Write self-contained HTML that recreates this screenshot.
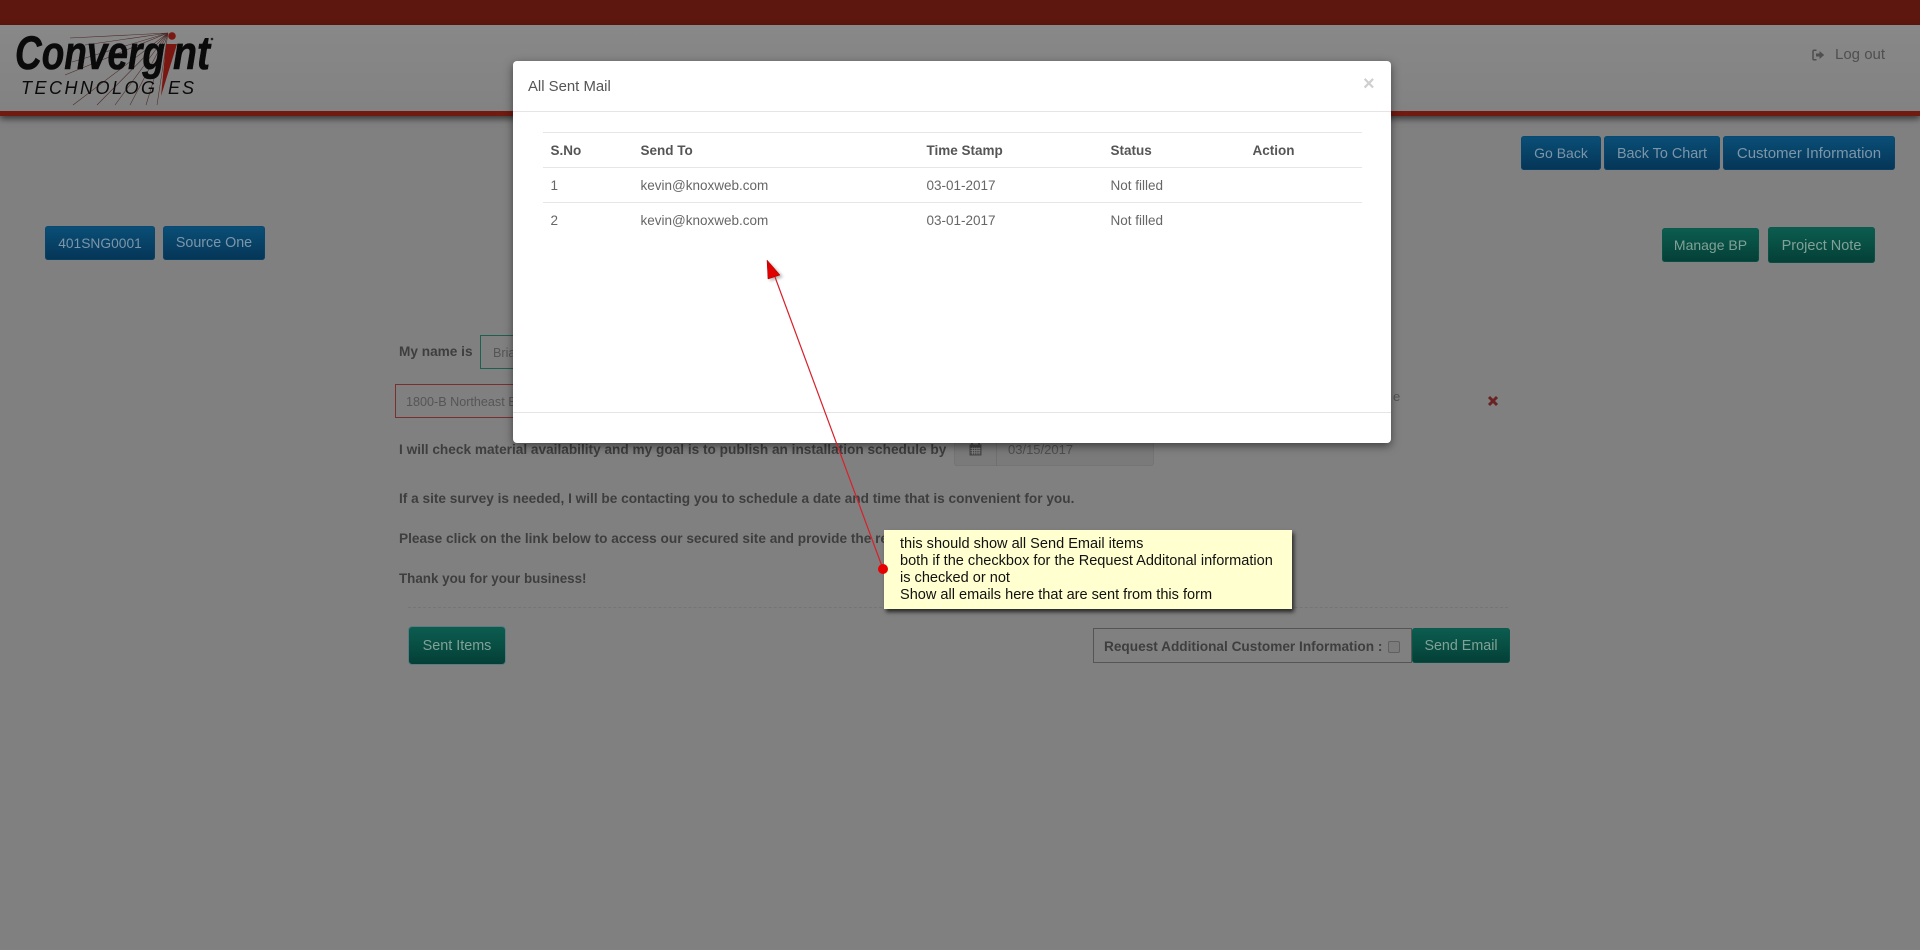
<!DOCTYPE html>
<html lang="en">
<head>
<meta charset="utf-8">
<title>All Sent Mail</title>
<style>
html,body{margin:0;padding:0;width:1920px;height:950px;overflow:hidden;background:#808080;font-family:"Liberation Sans",Arial,sans-serif}
.a{position:absolute;white-space:nowrap}
#top{left:0;top:0;width:1920px;height:25px;background:#5e170e}
#hdr{left:0;top:25px;width:1920px;height:86px;background:linear-gradient(#888888,#828282);border-bottom:5px solid #701a10;box-shadow:0 3px 6px rgba(0,0,0,.55)}
.btn{position:absolute;box-sizing:border-box;border-radius:3px;text-align:center;font-size:14.4px;white-space:nowrap;display:flex;align-items:center;justify-content:center}
.b{background:linear-gradient(#0a4f77,#053557);color:#7c95a8;box-shadow:inset 0 0 0 1px rgba(10,70,110,.6)}
.g{background:linear-gradient(#0c5d50,#043f36);color:#80a197;box-shadow:inset 0 0 0 1px rgba(10,90,75,.6)}
.t{color:#3e3e3e;font-weight:bold;font-size:13.65px;line-height:18px}
.in{position:absolute;box-sizing:border-box;font-size:12.6px;color:#555;display:flex;align-items:center;padding-top:1px}
#modal{left:513px;top:61px;width:878px;height:382px;background:#fff;border-radius:4px;box-shadow:0 3px 9px rgba(0,0,0,.5);color:#666}
#modal table{position:absolute;left:30px;top:71px;width:819px;border-collapse:collapse;table-layout:fixed;font-size:13.5px;border-top:1px solid #e6e6e6}
#modal th,#modal td{height:34px;padding:0 0 0 7.5px;text-align:left;border-bottom:1px solid #e6e6e6;box-sizing:border-box}
#modal tr{height:35px}
#modal tbody tr:last-child td{border-bottom:none}
#modal th{color:#555;font-weight:bold}
#note{left:884px;top:530px;width:408px;height:79px;background:#ffffcf;box-shadow:2px 3px 4px rgba(0,0,0,.7);font-size:14.55px;line-height:17px;color:#111;box-sizing:border-box;padding:6px 0 0 16px}
</style>
</head>
<body>
<div class="a" id="top"></div>
<div class="a" id="hdr"></div>

<svg class="a" style="left:0;top:25px" width="230" height="90" viewBox="0 25 230 90">
  <g stroke="#4a2a26" stroke-width=".55" fill="none">
    <path d="M168 33L70 38M168 33L85 45M168 33L72 62M168 33L65 75M168 33L73 105M168 33L97 105M168 33L115 105M168 33L130 105M168 33L146 105M168 33L157 105"/>
  </g>
  <g font-family="'Liberation Sans',Arial,sans-serif" font-style="italic" fill="#0a0a0a">
    <text x="15" y="69" font-size="47" font-weight="bold" textLength="150" lengthAdjust="spacingAndGlyphs" stroke="#0a0a0a" stroke-width=".6">Converg</text>
    <text x="173" y="69" font-size="47" font-weight="bold" textLength="37" lengthAdjust="spacingAndGlyphs" stroke="#0a0a0a" stroke-width=".6">nt</text>
    <text x="21" y="94" font-size="18" textLength="134" lengthAdjust="spacing">TECHNOLOG</text>
    <text x="168" y="94" font-size="18" textLength="26" lengthAdjust="spacing">ES</text>
  </g>
  <path d="M166 44L177 44L161 96Z" fill="#7a1710"/>
  <circle cx="172" cy="36" r="3.8" fill="#7a1710"/>
  <circle cx="212" cy="39" r="1.3" fill="#222"/>
</svg>

<svg class="a" style="left:1812px;top:49px" width="13" height="12" viewBox="0 0 13 12">
  <path d="M4.5 1.2H2.2Q1 1.2 1 2.4V9.6Q1 10.8 2.2 10.8H4.5" fill="none" stroke="#4f4f4f" stroke-width="1.5"/>
  <path d="M4 4.5H7.5V2L12.2 6L7.5 10V7.5H4Z" fill="#4f4f4f"/>
</svg>
<div class="a" style="left:1835px;top:46px;font-size:15px;line-height:18px;color:#4f4f4f">Log out</div>

<div class="btn b" style="left:1521px;top:136px;width:80px;height:34px;font-size:14px">Go Back</div>
<div class="btn b" style="left:1604px;top:136px;width:116px;height:34px;padding-top:1px">Back To Chart</div>
<div class="btn b" style="left:1723px;top:136px;width:172px;height:34px;font-size:15px">Customer Information</div>
<div class="btn b" style="left:45px;top:226px;width:110px;height:34px;font-size:13.8px">401SNG0001</div>
<div class="btn b" style="left:163px;top:226px;width:102px;height:34px;font-size:14.3px">Source One</div>
<div class="btn g" style="left:1662px;top:228px;width:97px;height:34px;font-size:14px">Manage BP</div>
<div class="btn g" style="left:1768px;top:227px;width:107px;height:36px;font-size:14.5px;padding-top:1px">Project Note</div>

<div class="a t" style="left:399px;top:343px">My name is</div>
<div class="in" style="left:480px;top:335px;width:160px;height:34px;border:1px solid #1f5f50;padding-left:12px">Brian</div>
<div class="in" style="left:395px;top:384px;width:200px;height:34px;border:1px solid #7a2f2f;padding-left:10px">1800-B Northeast Blvd</div>
<div class="a" style="left:1393px;top:389px;font-size:13px;color:#555">e</div>
<svg class="a" style="left:1487px;top:395px" width="12" height="12" viewBox="0 0 12 12"><path d="M2 2L10 10M10 2L2 10" stroke="#6a2323" stroke-width="3"/></svg>

<div class="a t" style="left:399px;top:441px">I will check material availability and my goal is to publish an installation schedule by</div>
<div class="a" style="left:954px;top:432px;width:200px;height:34px;background:#7a7a7a;border-radius:3px;box-shadow:inset 0 0 0 1px #747474"></div>
<div class="a" style="left:996px;top:432px;width:1px;height:34px;background:#6f6f6f"></div>
<svg class="a" style="left:969px;top:443px" width="13" height="13" viewBox="0 0 13 13">
  <path d="M3 0v2M10 0v2" stroke="#3f3f3f" stroke-width="1.6"/>
  <rect x=".5" y="1.5" width="12" height="11" fill="#454545"/>
  <path d="M1.5 5.5h10M1.5 7.7h10M1.5 9.9h10M3.5 4.5v7M5.7 4.5v7M7.9 4.5v7M10.1 4.5v7" stroke="#858585" stroke-width=".8"/>
</svg>
<div class="a" style="left:1008px;top:442px;font-size:13px;line-height:16px;color:#4f4f4f">03/15/2017</div>

<div class="a t" style="left:399px;top:490px">If a site survey is needed, I will be contacting you to schedule a date and time that is convenient for you.</div>
<div class="a t" style="left:399px;top:530px">Please click on the link below to access our secured site and provide the required information.</div>
<div class="a t" style="left:399px;top:570px;font-size:13.4px">Thank you for your business!</div>

<div class="a" style="left:408px;top:607px;width:1100px;border-top:1px dashed #757575"></div>

<div class="btn g" style="left:409px;top:627px;width:96px;height:37px;box-shadow:0 0 0 1px #5d7a82">Sent Items</div>
<div class="a" style="left:1093px;top:628px;width:319px;height:35px;box-sizing:border-box;border:1px solid #555"></div>
<div class="a t" style="left:1104px;top:638px">Request Additional Customer Information :</div>
<div class="a" style="left:1388px;top:641px;width:12px;height:12px;box-sizing:border-box;border:1px solid #5f5f5f;border-radius:2px;background:#7b7b7b"></div>
<div class="btn g" style="left:1412px;top:628px;width:98px;height:35px;font-size:14.3px">Send Email</div>

<div class="a" id="modal">
  <div class="a" style="left:15px;top:17px;font-size:14.9px;line-height:18px;color:#555">All Sent Mail</div>
  <div class="a" style="left:850px;top:12px;font-size:20px;line-height:22px;color:#cfcfcf;font-weight:bold">×</div>
  <div class="a" style="left:0;top:50px;width:878px;height:1px;background:#e5e5e5"></div>
  <table>
    <colgroup><col style="width:90px"><col style="width:286px"><col style="width:184px"><col style="width:142px"><col></colgroup>
    <thead><tr><th>S.No</th><th>Send To</th><th>Time Stamp</th><th>Status</th><th>Action</th></tr></thead>
    <tbody>
      <tr><td>1</td><td>kevin@knoxweb.com</td><td>03-01-2017</td><td>Not filled</td><td></td></tr>
      <tr><td>2</td><td>kevin@knoxweb.com</td><td>03-01-2017</td><td>Not filled</td><td></td></tr>
    </tbody>
  </table>
  <div class="a" style="left:0;top:351px;width:878px;height:1px;background:#e5e5e5"></div>
</div>

<div class="a" id="note">this should show all Send Email items<br>both if the checkbox for the Request Additonal information<br>is checked or not<br>Show all emails here that are sent from this form</div>

<svg class="a" style="left:740px;top:240px" width="170" height="350" viewBox="740 240 170 350">
  <defs><filter id="s" x="-30%" y="-30%" width="160%" height="160%"><feGaussianBlur stdDeviation="1.5"/></filter></defs>
  <path d="M769 262L770 281L783 277Z" fill="#000" opacity=".3" filter="url(#s)"/>
  <path d="M775 277L883 569" stroke="#d8202a" stroke-width="1.2" fill="none"/>
  <path d="M767 260L768 279L780 275Z" fill="#e00000" stroke="#a00000" stroke-width=".5"/>
  <circle cx="883" cy="569" r="5" fill="#e60000"/>
</svg>
</body>
</html>
